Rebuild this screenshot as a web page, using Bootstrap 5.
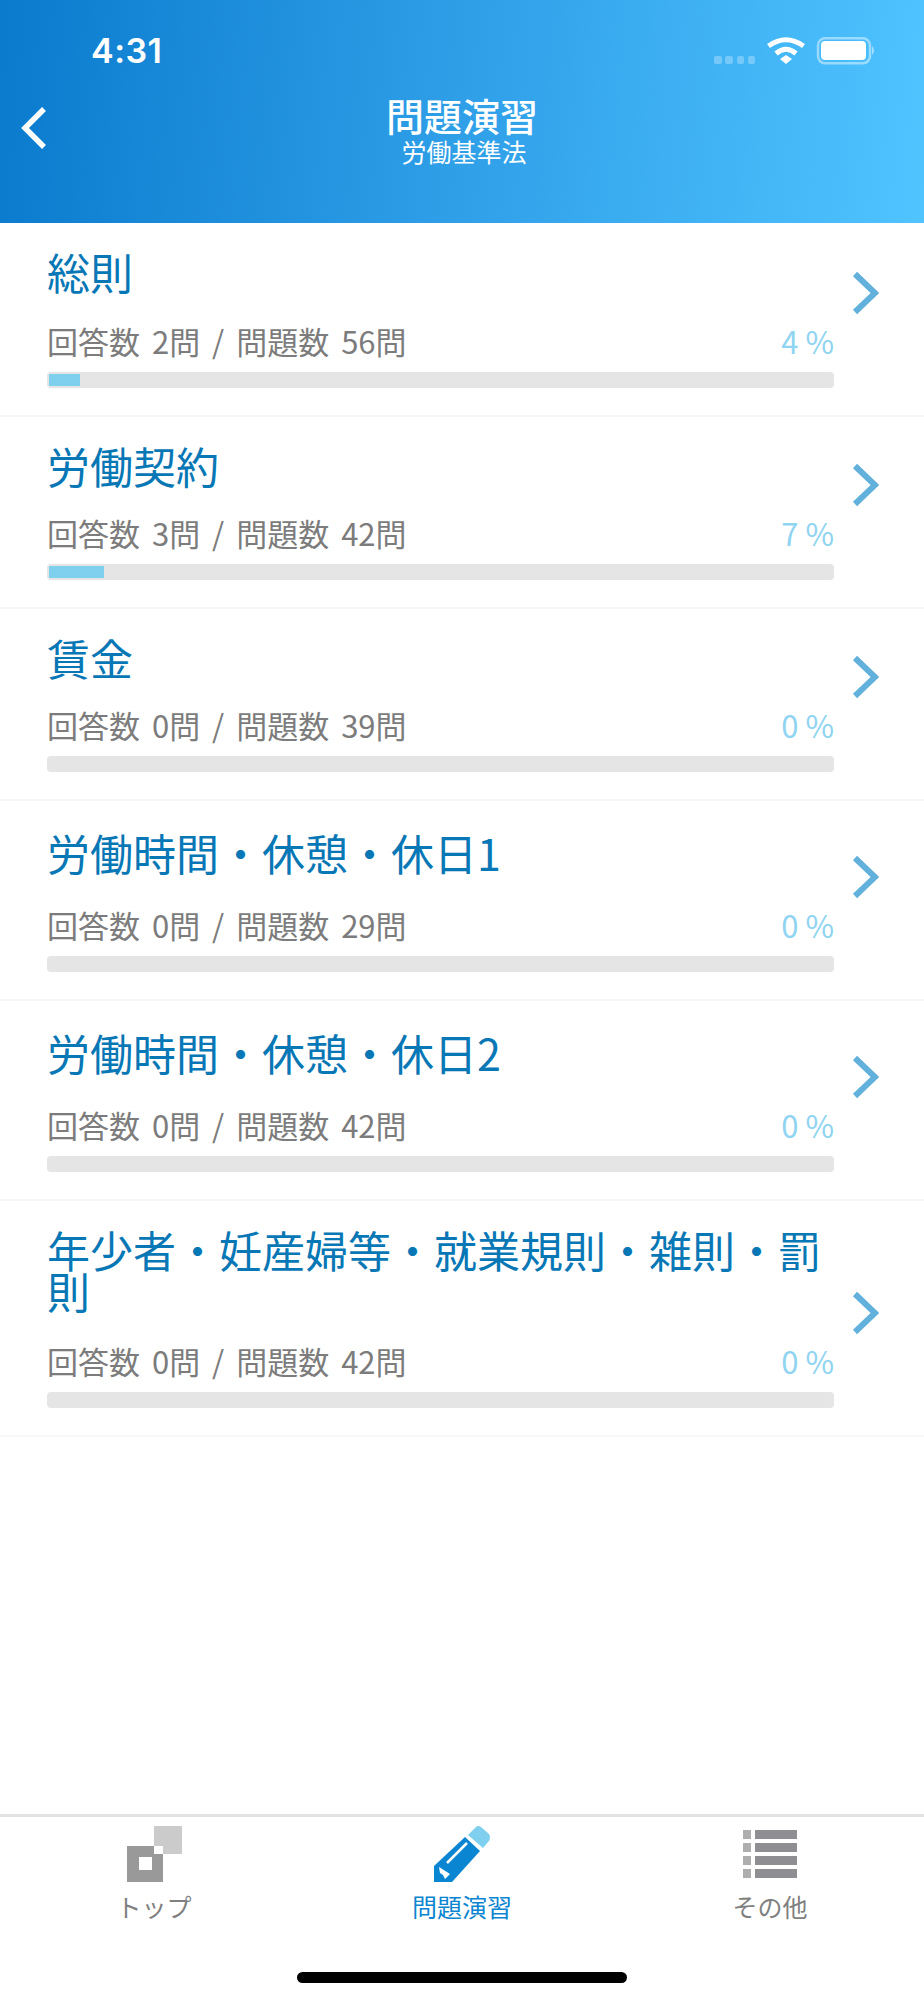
<!DOCTYPE html>
<html lang="ja">
<head>
<meta charset="utf-8">
<title>問題演習</title>
<link href="https://cdn.jsdelivr.net/npm/bootstrap@5.3.0/dist/css/bootstrap.min.css" rel="stylesheet">
<style>
html,body{height:100%;}
body{font-family:"Noto Sans CJK JP","Liberation Sans",sans-serif;background:#fff;height:2000px;}
.hdr{height:223px;background:linear-gradient(95deg,#0a7bcd 0%,#2f9fe8 50%,#4fc4ff 100%);color:#fff;}
.sbar{height:90px;padding:0 48px 0 91px;}
.clock{font-family:Inter,"Liberation Sans",sans-serif;font-weight:600;font-size:34px;line-height:1;margin-top:34px;letter-spacing:.5px;}
.sicons{margin-top:37px;}
.navside{width:100px;padding-left:20px;}
.navtitle{font-size:38px;line-height:40px;font-weight:500;margin-top:5px;}
.navsub{font-size:25px;line-height:26px;margin-top:3px;padding-left:4px;}
.navbody{width:724px;}
.list-group-flush>.itemrow.list-group-item,.list-group-flush>.itemrow.list-group-item:last-child{border-style:solid;border-color:#f7f7f7;border-width:0 0 2px;padding:0 45px 0 47px;border-radius:0;}
.itembody{width:787px;}
.ttl{color:#0877b5;font-size:43px;line-height:41px;padding-top:28px;height:98px;}
.ttl-first{height:100px;}
.ttl-mid{height:106px;padding-top:31px;}
.ttl-tall{height:142px;padding-top:28px;}
.subl{color:#7c7c7c;font-size:31px;line-height:36px;word-spacing:5px;}
.pct{color:#8fd4f1;font-size:31px;line-height:36px;}
.track{height:16px;background:#e5e5e5;border-radius:4px;margin-top:13px;margin-bottom:27px;overflow:hidden;padding:2px;}
.fill{height:100%;background:#7fcfee;}
.chev{margin-top:46px;}
.chev-first{margin-top:48px;}
.chev-mid{margin-top:54px;}
.chev-tall{margin-top:90px;}
.tabs{height:186px;border-top:3px solid #e2e2e2;position:relative;}
.tabcell{width:308px;padding-top:6px;}
.tabico{height:62px;display:block;margin:0 auto;}
.tablbl{font-size:25px;line-height:30px;color:#808080;margin-top:6px;}
.tabon{color:#0a85d1;}
.homebar{position:absolute;left:297px;top:155px;width:330px;height:11px;background:#000;border-radius:6px;}
</style>
</head>
<body class="d-flex flex-column">
<header class="hdr">
  <div class="sbar d-flex justify-content-between align-items-start">
    <div class="clock">4:31</div>
    <svg class="sicons" width="162" height="28" viewBox="0 0 162 28">
      <g fill="#fff" fill-opacity=".28"><rect x="0" y="19" width="8" height="8" rx="2"/><rect x="11" y="19" width="8" height="8" rx="2"/><rect x="23" y="19" width="7" height="8" rx="2"/><rect x="34" y="19" width="7" height="8" rx="2"/></g>
      <path d="M54.500 9 Q72 -3.500 89.500 9" fill="none" stroke="#fff" stroke-width="5"/>
      <path d="M62 16.500 Q72 8 82 16.500" fill="none" stroke="#fff" stroke-width="5"/>
      <path d="M66 22 L72 18 L78 22 L72 27Z" fill="#fff"/>
      <rect x="104" y="1.300" width="52" height="25" rx="7" fill="none" stroke="#fff" stroke-opacity=".45" stroke-width="2.500"/>
      <rect x="107" y="4" width="45" height="19" rx="4" fill="#fff"/>
      <path d="M158 9 Q162 13.500 158 18Z" fill="#fff" fill-opacity=".5"/>
    </svg>
  </div>
  <div class="d-flex">
    <div class="navside">
      <svg width="28" height="44" viewBox="0 0 28 44" class="mt-3"><path d="M24 3 L5 22 L24 41" fill="none" stroke="#fff" stroke-width="5.500"/></svg>
    </div>
    <div class="navbody text-center">
      <div class="navtitle">問題演習</div>
      <div class="navsub">労働基準法</div>
    </div>
    <div class="navside"></div>
  </div>
</header>
<main class="flex-grow-1">
  <div class="list-group list-group-flush">
    <div class="list-group-item itemrow d-flex justify-content-between align-items-start">
      <div class="itembody">
        <div class="ttl ttl-first">総則</div>
        <div class="d-flex justify-content-between"><span class="subl">回答数 2問 / 問題数 56問</span><span class="pct">4 %</span></div>
        <div class="track"><div class="fill" style="width:4%"></div></div>
      </div>
      <svg class="chev chev-first" width="27" height="44" viewBox="0 0 27 44"><path d="M3 3 L23 22 L3 41" fill="none" stroke="#62b1dd" stroke-width="6"/></svg>
    </div>
    <div class="list-group-item itemrow d-flex justify-content-between align-items-start">
      <div class="itembody">
        <div class="ttl">労働契約</div>
        <div class="d-flex justify-content-between"><span class="subl">回答数 3問 / 問題数 42問</span><span class="pct">7 %</span></div>
        <div class="track"><div class="fill" style="width:7%"></div></div>
      </div>
      <svg class="chev" width="27" height="44" viewBox="0 0 27 44"><path d="M3 3 L23 22 L3 41" fill="none" stroke="#62b1dd" stroke-width="6"/></svg>
    </div>
    <div class="list-group-item itemrow d-flex justify-content-between align-items-start">
      <div class="itembody">
        <div class="ttl">賃金</div>
        <div class="d-flex justify-content-between"><span class="subl">回答数 0問 / 問題数 39問</span><span class="pct">0 %</span></div>
        <div class="track"></div>
      </div>
      <svg class="chev" width="27" height="44" viewBox="0 0 27 44"><path d="M3 3 L23 22 L3 41" fill="none" stroke="#62b1dd" stroke-width="6"/></svg>
    </div>
    <div class="list-group-item itemrow d-flex justify-content-between align-items-start">
      <div class="itembody">
        <div class="ttl ttl-mid">労働時間・休憩・休日1</div>
        <div class="d-flex justify-content-between"><span class="subl">回答数 0問 / 問題数 29問</span><span class="pct">0 %</span></div>
        <div class="track"></div>
      </div>
      <svg class="chev chev-mid" width="27" height="44" viewBox="0 0 27 44"><path d="M3 3 L23 22 L3 41" fill="none" stroke="#62b1dd" stroke-width="6"/></svg>
    </div>
    <div class="list-group-item itemrow d-flex justify-content-between align-items-start">
      <div class="itembody">
        <div class="ttl ttl-mid">労働時間・休憩・休日2</div>
        <div class="d-flex justify-content-between"><span class="subl">回答数 0問 / 問題数 42問</span><span class="pct">0 %</span></div>
        <div class="track"></div>
      </div>
      <svg class="chev chev-mid" width="27" height="44" viewBox="0 0 27 44"><path d="M3 3 L23 22 L3 41" fill="none" stroke="#62b1dd" stroke-width="6"/></svg>
    </div>
    <div class="list-group-item itemrow d-flex justify-content-between align-items-start">
      <div class="itembody">
        <div class="ttl ttl-tall">年少者・妊産婦等・就業規則・雑則・罰則</div>
        <div class="d-flex justify-content-between"><span class="subl">回答数 0問 / 問題数 42問</span><span class="pct">0 %</span></div>
        <div class="track"></div>
      </div>
      <svg class="chev chev-tall" width="27" height="44" viewBox="0 0 27 44"><path d="M3 3 L23 22 L3 41" fill="none" stroke="#62b1dd" stroke-width="6"/></svg>
    </div>
  </div>
</main>
<footer class="tabs d-flex">
  <div class="tabcell text-center">
    <svg class="tabico" width="60" height="62" viewBox="0 0 60 62">
      <rect x="30" y="3" width="28" height="28" fill="#cbcbcb"/>
      <rect x="3" y="23" width="36" height="36" fill="#999"/>
      <rect x="30" y="23" width="9" height="8" fill="#fff"/>
      <rect x="15" y="34" width="13" height="13" fill="#fff"/>
    </svg>
    <div class="tablbl">トップ</div>
  </div>
  <div class="tabcell text-center">
    <svg class="tabico" width="60" height="62" viewBox="0 0 60 62">
      <path d="M36 12 L44 4 Q46 2 49 4 L57 11 Q59 14 57 18 L51 25Z" fill="#7fcfee"/>
      <path d="M33 14 L48 28 L20 59 H2 V43Z" fill="#0a85d1"/>
      <path d="M15 40 L35 20" stroke="#fff" stroke-width="2.500" fill="none"/>
      <path d="M7 44 L18 51 L13 56 L11 52 L8 50Z" fill="#fff"/>
    </svg>
    <div class="tablbl tabon">問題演習</div>
  </div>
  <div class="tabcell text-center">
    <svg class="tabico" width="60" height="62" viewBox="0 0 60 62">
      <g fill="#aeaeae"><rect x="3" y="7" width="8" height="9"/><rect x="3" y="20" width="8" height="9"/><rect x="3" y="33" width="8" height="9"/><rect x="3" y="46" width="8" height="9"/></g>
      <g fill="#8e8e93"><rect x="15" y="7" width="42" height="9"/><rect x="15" y="20" width="42" height="9"/><rect x="15" y="33" width="42" height="9"/><rect x="15" y="46" width="42" height="9"/></g>
    </svg>
    <div class="tablbl">その他</div>
  </div>
  <div class="homebar"></div>
</footer>
<script src="https://cdn.jsdelivr.net/npm/bootstrap@5.3.0/dist/js/bootstrap.bundle.min.js"></script>
</body>
</html>
